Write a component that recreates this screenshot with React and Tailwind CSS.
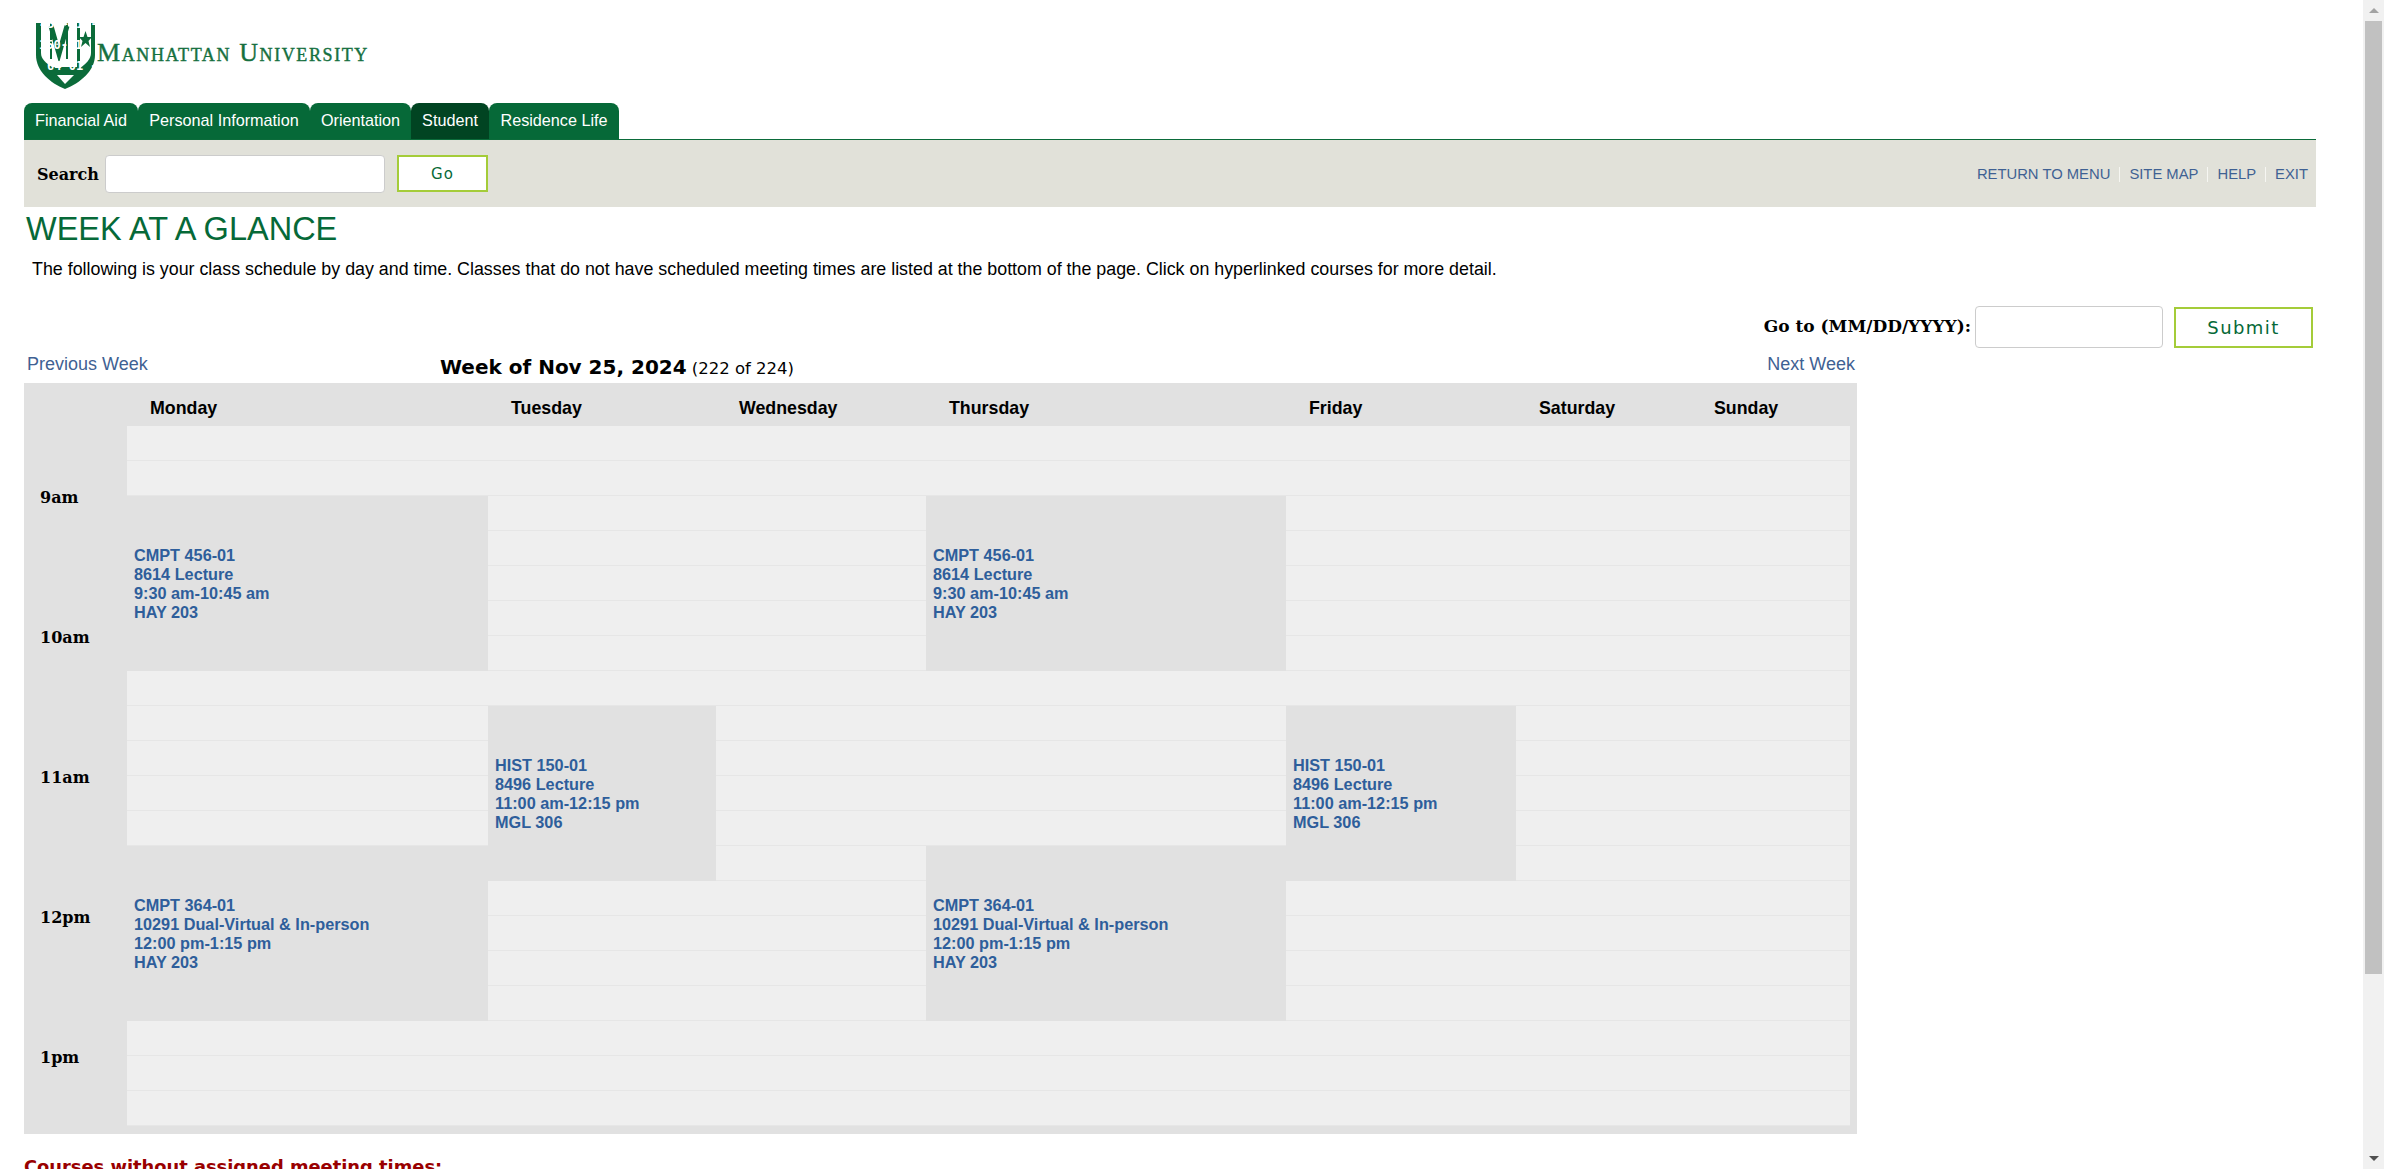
import React from "react";

const tabs = [
  { label: "Financial Aid", w: "w-[114px]" },
  { label: "Personal Information", w: "w-[172px]" },
  { label: "Orientation", w: "w-[101px]" },
  { label: "Student", w: "w-[78px]", active: true },
  { label: "Residence Life", w: "w-[130px]" },
];

const days = [
  { label: "Monday", col: "col-start-2" },
  { label: "Tuesday", col: "col-start-3" },
  { label: "Wednesday", col: "col-start-4" },
  { label: "Thursday", col: "col-start-5" },
  { label: "Friday", col: "col-start-6" },
  { label: "Saturday", col: "col-start-7" },
  { label: "Sunday", col: "col-start-8" },
];

const hours = [
  { label: "9am", row: "row-start-2" },
  { label: "10am", row: "row-start-6" },
  { label: "11am", row: "row-start-10" },
  { label: "12pm", row: "row-start-14" },
  { label: "1pm", row: "row-start-18" },
];

const algo = {
  lines: ["CMPT 456-01", "8614 Lecture", "9:30 am-10:45 am", "HAY 203"],
  row: "row-start-4",
};
const hist = {
  lines: ["HIST 150-01", "8496 Lecture", "11:00 am-12:15 pm", "MGL 306"],
  row: "row-start-10",
};
const db = {
  lines: ["CMPT 364-01", "10291 Dual-Virtual & In-person", "12:00 pm-1:15 pm", "HAY 203"],
  row: "row-start-14",
};

const events = [
  { ...algo, col: "col-start-2" },
  { ...algo, col: "col-start-5" },
  { ...hist, col: "col-start-3" },
  { ...hist, col: "col-start-6" },
  { ...db, col: "col-start-2" },
  { ...db, col: "col-start-5" },
];

// column 0 = monday ... 6 = sunday, slots covered by a class stay out of the grid
const taken = { 0: [2, 3, 4, 5, 6, 12, 13, 14, 15, 16], 3: [2, 3, 4, 5, 6, 12, 13, 14, 15, 16], 1: [8, 9, 10, 11, 12], 4: [8, 9, 10, 11, 12] };

const Logo = () => (
  <div className="relative w-[60px] h-[66px] shrink-0">
    <svg width="60" height="66" viewBox="0 0 60 66">
      <path d="M0 0H59V32C59 48 44 60 29 66C14 60 0 48 0 32Z" fill="#0b6b3a" />
      <path d="M5 0H41V44H16C10 40 5 36 5 30Z" fill="#fff" />
      <path d="M44 0H55V30C55 36 50 41 44 45Z" fill="#fff" />
      <path d="M15 0V36M31 0V36" stroke="#0b6b3a" strokeWidth="2" fill="none" />
      <path d="M15 3L23 31L31 3" stroke="#0b6b3a" strokeWidth="5" fill="none" />
      <path d="M49.500 8L51.500 14H56L52.500 18L54 24L49.500 20L45 24L46.500 18L43 14H47.500Z" fill="#0b6b3a" />
      <path d="M21 52H38L29 61Z" fill="#fff" />
    </svg>
    <span className="absolute left-[4px] top-[-3px] h-[9px] overflow-hidden text-[12px] leading-[9px] font-bold text-white whitespace-nowrap font-['DejaVu_Sans_Mono',monospace]">456-01 -</span>
    <span className="absolute left-[3px] top-[16px] text-[12px] leading-3 font-bold text-white whitespace-nowrap font-['DejaVu_Sans_Mono',monospace]">150-01</span>
    <span className="absolute left-[11px] top-[37px] text-[12px] leading-3 font-bold text-white whitespace-nowrap font-['DejaVu_Sans_Mono',monospace]">64-01 -</span>
  </div>
);

const Pipe = () => <span className="w-px h-[15px] bg-[#f6f6f2]" />;

const App = () => {
  const cells = [];
  for (let row = 0; row < 20; row++) {
    for (let col = 0; col < 7; col++) {
      if (taken[col] && taken[col].includes(row)) continue;
      cells.push({ row, col });
    }
  }

  return (
    <div className="h-screen overflow-hidden flex bg-white text-black font-['Liberation_Sans',Arial,sans-serif]">
      <main className="flex-1 min-w-0 pl-6 pr-[47px]">
        <div className="h-[103px] flex items-start pl-[12px] pt-[23px]">
          <Logo />
          <span className="mt-[16px] ml-[1px] text-[26px] leading-7 text-[#16703f] tracking-[1.6px] [font-variant:small-caps] [-webkit-text-stroke:0.4px_#16703f] whitespace-nowrap font-['Liberation_Serif',serif]">
            Manhattan University
          </span>
        </div>

        <div className="flex h-[37px] border-b border-[#0b6b3a] items-stretch">
          {tabs.map((t) => (
            <div
              key={t.label}
              className={`${t.w} rounded-t-lg flex items-center justify-center pb-[1px] text-[16.2px] text-white ${t.active ? "bg-[#014422]" : "bg-[#066938]"}`}
            >
              {t.label}
            </div>
          ))}
        </div>

        <div className="h-[67px] bg-[#e1e1d9] flex items-center pl-[13px] pr-[8px]">
          <label className="mt-[2px] text-[16px] font-bold w-[68px] font-['DejaVu_Serif',serif]">Search</label>
          <input className="w-[280px] h-[38px] bg-white border border-[#cccccc] rounded-[4px]" />
          <button className="ml-3 w-[91px] h-[37px] pt-[2px] bg-white border-2 border-[#a4cc39] text-[#066938] text-[15px] tracking-[1px] font-['DejaVu_Sans',sans-serif]">Go</button>
          <div className="ml-auto mt-[1px] flex items-center gap-[9px] text-[14.8px] text-[#3f6193]">
            <a>RETURN TO MENU</a>
            <Pipe />
            <a>SITE MAP</a>
            <Pipe />
            <a>HELP</a>
            <Pipe />
            <a>EXIT</a>
          </div>
        </div>

        <h1 className="pl-[2px] mt-[3px] text-[32.5px] leading-[38px] font-normal text-[#066938]">WEEK AT A GLANCE</h1>
        <p className="pl-2 mt-[11px] text-[17.84px] leading-[20px] whitespace-nowrap">
          The following is your class schedule by day and time. Classes that do not have scheduled meeting times are listed at the bottom of the page. Click on hyperlinked courses for more detail.
        </p>

        <div className="mt-[27px] h-[42px] flex items-center justify-end pr-[3px]">
          <label className="text-[17px] font-bold mr-1 font-['DejaVu_Serif',serif]">Go to (MM/DD/YYYY):</label>
          <input className="w-[188px] h-[42px] bg-white border border-[#cccccc] rounded-[4px]" />
          <button className="ml-[11px] w-[139px] h-[41px] bg-white border-2 border-[#a4cc39] text-[#066938] text-[18px] tracking-[1.4px] font-['DejaVu_Sans',sans-serif]">Submit</button>
        </div>

        <div className="w-[1833px] h-[35px] flex items-start">
          <a className="pl-[3px] w-[416px] mt-[6px] text-[18px] leading-[21px] text-[#3f6193]">Previous Week</a>
          <div className="mt-[7px] font-['DejaVu_Sans',sans-serif] whitespace-nowrap">
            <span className="text-[20px] font-bold leading-[24px]">Week of Nov 25, 2024</span>{" "}
            <span className="text-[16.5px]">(222 of 224)</span>
          </div>
          <a className="ml-auto mr-[2px] mt-[6px] text-[18px] leading-[21px] text-[#3f6193]">Next Week</a>
        </div>

        <div className="w-[1833px] h-[751px] bg-[#e1e1e1] pr-[7px] grid grid-cols-[103px_361px_228px_210px_360px_230px_175px_159px] grid-rows-[43px_repeat(20,35px)]">
          {days.map((d) => (
            <div key={d.label} className={`${d.col} row-start-1 pl-[23px] pt-[15px] text-[17.8px] leading-5 font-bold`}>
              {d.label}
            </div>
          ))}
          {hours.map((h) => (
            <div key={h.label} className={`col-start-1 ${h.row} row-span-4 flex items-center pl-4 pt-[3px] text-[16px] font-bold font-['DejaVu_Serif',serif]`}>
              {h.label}
            </div>
          ))}
          {cells.map((c) => (
            <div
              key={`${c.row}-${c.col}`}
              className="bg-[#efefef] border-b border-[#e6e6e6]"
              style={{ gridRow: c.row + 2, gridColumn: c.col + 2 }}
            />
          ))}
          {events.map((e) => (
            <div key={e.lines[0] + e.col} className={`${e.col} ${e.row} row-span-5 flex flex-col justify-center pl-[7px] bg-[#e1e1e1] text-[16.25px] leading-[19px] font-bold text-[#2e5e9b]`}>
              {e.lines.map((l) => (
                <div key={l} className="whitespace-nowrap">{l}</div>
              ))}
            </div>
          ))}
        </div>

        <h2 className="mt-[23px] text-[17.85px] leading-5 font-bold text-[#990000] font-['DejaVu_Sans',sans-serif]">Courses without assigned meeting times:</h2>
      </main>

      <aside className="w-[21px] shrink-0 bg-[#f1f1f1] flex flex-col items-center">
        <div className="h-[21px] flex items-center justify-center">
          <div className="w-0 h-0 border-x-[5px] border-x-transparent border-b-[5px] border-b-[#a3a3a3]" />
        </div>
        <div className="w-[17px] h-[953px] bg-[#c1c1c1]" />
        <div className="mt-auto h-[21px] flex items-center justify-center">
          <div className="w-0 h-0 border-x-[5px] border-x-transparent border-t-[5px] border-t-[#505050]" />
        </div>
      </aside>
    </div>
  );
};

export default App;
